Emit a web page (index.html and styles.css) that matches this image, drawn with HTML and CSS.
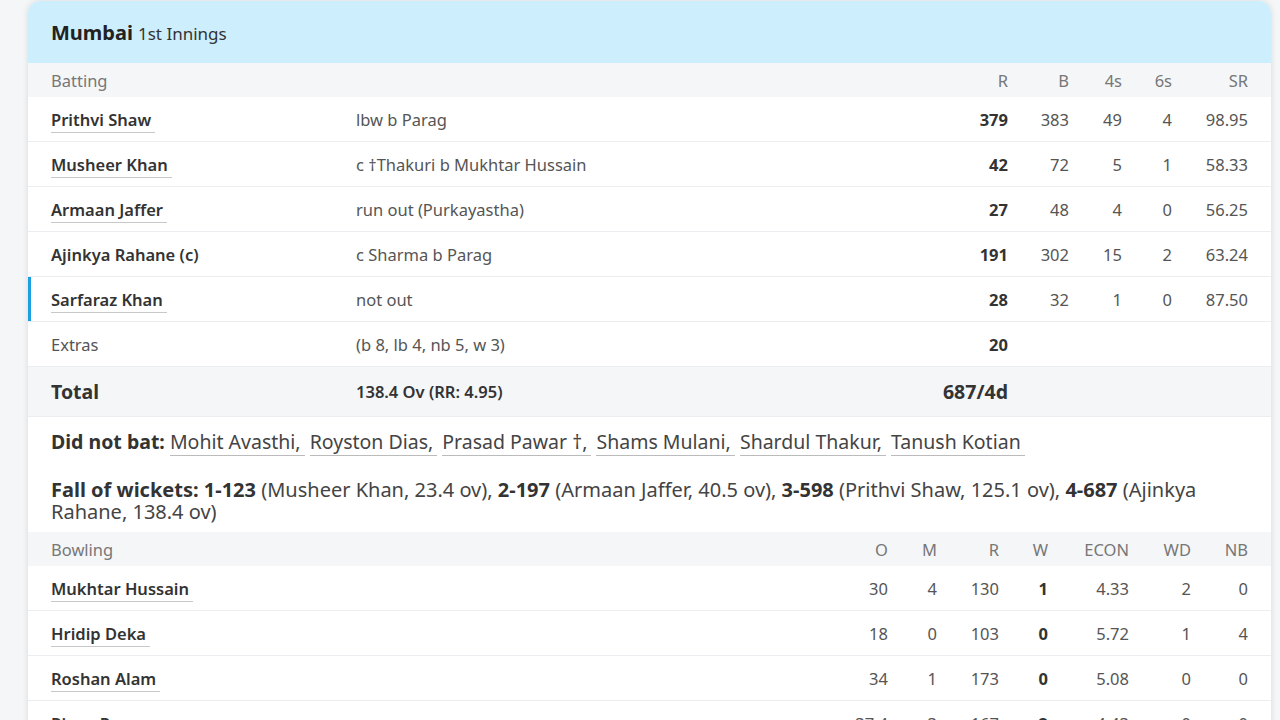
FILE: index.html
```html
<!DOCTYPE html>
<html>
<head>
<meta charset="utf-8">
<link rel="stylesheet" href="styles.css">
</head>
<body>
<div class="card">
  <div class="card-head"><span class="team">Mumbai</span> <span class="inn">1st Innings</span></div>

  <div class="bat-grid head-row">
    <div>Batting</div><div></div><div class="num">R</div><div class="num">B</div><div class="num">4s</div><div class="num">6s</div><div class="num">SR</div>
  </div>
  <div class="bat-grid row">
    <div><a class="pl">Prithvi Shaw</a></div><div class="dis">lbw b Parag</div><div class="num b">379</div><div class="num">383</div><div class="num">49</div><div class="num">4</div><div class="num">98.95</div>
  </div>
  <div class="bat-grid row">
    <div><a class="pl">Musheer Khan</a></div><div class="dis">c †Thakuri b Mukhtar Hussain</div><div class="num b">42</div><div class="num">72</div><div class="num">5</div><div class="num">1</div><div class="num">58.33</div>
  </div>
  <div class="bat-grid row">
    <div><a class="pl">Armaan Jaffer</a></div><div class="dis">run out (Purkayastha)</div><div class="num b">27</div><div class="num">48</div><div class="num">4</div><div class="num">0</div><div class="num">56.25</div>
  </div>
  <div class="bat-grid row">
    <div><a class="pl nou">Ajinkya Rahane (c)</a></div><div class="dis">c Sharma b Parag</div><div class="num b">191</div><div class="num">302</div><div class="num">15</div><div class="num">2</div><div class="num">63.24</div>
  </div>
  <div class="bat-grid row active">
    <div><a class="pl">Sarfaraz Khan</a></div><div class="dis">not out</div><div class="num b">28</div><div class="num">32</div><div class="num">1</div><div class="num">0</div><div class="num">87.50</div>
  </div>
  <div class="bat-grid row last">
    <div class="extras">Extras</div><div class="dis">(b 8, lb 4, nb 5, w 3)</div><div class="num b">20</div><div></div><div></div><div></div><div></div>
  </div>
  <div class="bat-grid total-row">
    <div class="tot">Total</div><div class="ov">138.4 Ov (RR: 4.95)</div><div class="num tot">687/4d</div><div></div><div></div><div></div><div></div>
  </div>

  <div class="dnb"><b>Did not bat:</b> <a class="lk">Mohit Avasthi,</a> <a class="lk">Royston Dias,</a> <a class="lk">Prasad Pawar †,</a> <a class="lk">Shams Mulani,</a> <a class="lk">Shardul Thakur,</a> <a class="lk">Tanush Kotian</a></div>

  <div class="fow"><b>Fall of wickets:</b> <b>1-123</b> (Musheer Khan, 23.4 ov), <b>2-197</b> (Armaan Jaffer, 40.5 ov), <b>3-598</b> (Prithvi Shaw, 125.1 ov), <b>4-687</b> (Ajinkya Rahane, 138.4 ov)</div>

  <div class="bowl-grid head-row">
    <div>Bowling</div><div class="num">O</div><div class="num">M</div><div class="num">R</div><div class="num">W</div><div class="num">ECON</div><div class="num">WD</div><div class="num">NB</div>
  </div>
  <div class="bowl-grid row">
    <div><a class="pl">Mukhtar Hussain</a></div><div class="num">30</div><div class="num">4</div><div class="num">130</div><div class="num b">1</div><div class="num">4.33</div><div class="num">2</div><div class="num">0</div>
  </div>
  <div class="bowl-grid row">
    <div><a class="pl">Hridip Deka</a></div><div class="num">18</div><div class="num">0</div><div class="num">103</div><div class="num b">0</div><div class="num">5.72</div><div class="num">1</div><div class="num">4</div>
  </div>
  <div class="bowl-grid row">
    <div><a class="pl">Roshan Alam</a></div><div class="num">34</div><div class="num">1</div><div class="num">173</div><div class="num b">0</div><div class="num">5.08</div><div class="num">0</div><div class="num">0</div>
  </div>
  <div class="bowl-grid row">
    <div><a class="pl">Riyan Parag</a></div><div class="num">37.4</div><div class="num">3</div><div class="num">167</div><div class="num b">2</div><div class="num">4.43</div><div class="num">0</div><div class="num">0</div>
  </div>
</div>
</body>
</html>
```

FILE: styles.css
```css
html, body {
  margin: 0;
  padding: 0;
  background: #f5f6f8;
  font-family: "Noto Sans", "Open Sans", sans-serif;
  color: #333;
  overflow: hidden;
}
body {
  padding: 1px 9px 0 28px;
}
.card {
  background: #fff;
  border-radius: 12px 12px 0 0;
  box-shadow: 0 0 6px rgba(0,0,0,0.12);
  overflow: hidden;
}
.card-head {
  background: #cdeefc;
  height: 62px;
  padding: 0 23px;
  display: flex;
  align-items: center;
  gap: 5px;
}
.team {
  font-weight: 700;
  font-size: 20px;
  color: #222;
}
.inn {
  font-size: 17px;
  color: #333;
  padding-top: 2px;
}
.bat-grid {
  display: grid;
  grid-template-columns: 305px 1fr 70px 61px 53px 50px 76px;
  align-items: center;
  padding: 0 23px;
}
.bowl-grid {
  display: grid;
  grid-template-columns: 1fr 60px 49px 62px 49px 81px 62px 57px;
  align-items: center;
  padding: 0 23px;
}
.head-row {
  background: #f5f6f8;
  height: 34px;
  color: #777;
  font-size: 16.5px;
}
.row {
  height: 44px;
  border-bottom: 1px solid #ecedf0;
  font-size: 16.5px;
  color: #555;
}
.row.last {
  border-bottom: none;
}
.row.active {
  box-shadow: inset 3px 0 0 #1a9fe0;
}
.num {
  text-align: right;
}
.b {
  font-weight: 700;
  color: #333;
}
.pl {
  font-weight: 600;
  color: #333;
  border-bottom: 1px solid #c8c8c8;
  padding-right: 4px;
  padding-bottom: 1px;
}
.pl.nou {
  border-bottom: none;
}
.dis, .extras {
  color: #555;
}
.total-row {
  background: #f5f6f8;
  height: 49px;
  border-top: 1px solid #ecedf0;
  border-bottom: 1px solid #ecedf0;
}
.tot {
  font-weight: 700;
  font-size: 19.5px;
  color: #333;
}
.ov {
  font-weight: 600;
  font-size: 16.5px;
  color: #333;
}
.dnb {
  padding: 11px 23px 0;
  font-size: 19.5px;
  line-height: 28px;
  color: #333;
}
.lk {
  border-bottom: 1px solid #bbb;
  padding-right: 4px;
  color: #444;
}
.fow {
  padding: 23px 23px 9px;
  font-size: 20px;
  line-height: 22px;
  color: #444;
}
.fow b, .dnb b {
  color: #333;
}
```
